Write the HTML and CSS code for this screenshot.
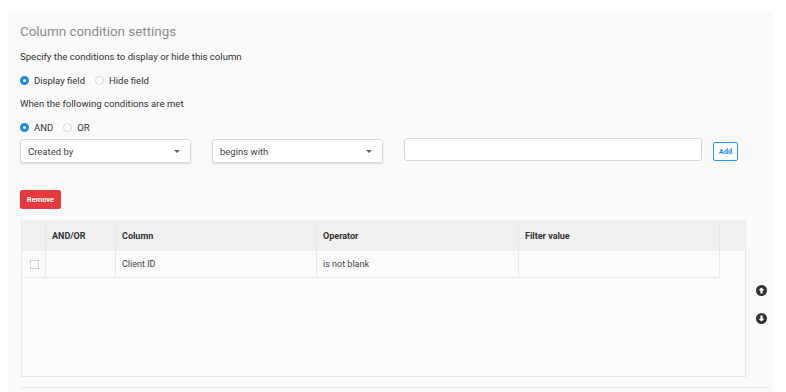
FILE: index.html
```html
<!DOCTYPE html>
<html lang="en">
<head>
    <meta charset="UTF-8">
    <title>Column condition settings</title>
    <link rel="stylesheet" href="styles.css">
</head>
<body>
    <div class="panel">
        <h2 class="title">Column condition settings</h2>
        <p class="line spec">Specify the conditions to display or hide this column</p>
        <div class="radios">
            <label class="radio"><span class="dot on"></span>Display field</label>
            <label class="radio"><span class="dot"></span>Hide field</label>
        </div>
        <p class="line when">When the following conditions are met</p>
        <div class="radios">
            <label class="radio"><span class="dot on"></span>AND</label>
            <label class="radio"><span class="dot"></span>OR</label>
        </div>

        <div class="controls">
            <div class="select">Created by<span class="caret"></span></div>
            <div class="select">begins with<span class="caret"></span></div>
            <div class="text-input"></div>
            <button class="btn-add">Add</button>
        </div>

        <button class="btn-remove">Remove</button>

        <div class="grid-wrap">
            <div class="grid">
                <div class="grid-head">
                    <div class="cell"></div>
                    <div class="cell">AND/OR</div>
                    <div class="cell">Column</div>
                    <div class="cell">Operator</div>
                    <div class="cell">Filter value</div>
                    <div class="cell"></div>
                </div>
                <div class="grid-row">
                    <div class="cell"><span class="check"></span></div>
                    <div class="cell"></div>
                    <div class="cell">Client ID</div>
                    <div class="cell">is not blank</div>
                    <div class="cell"></div>
                </div>
            </div>
            <div class="movers">
                <svg width="11" height="11" viewBox="0 0 12 12">
                    <circle cx="6" cy="6" r="6" fill="#333"/>
                    <path d="M6 2.6 L9.2 5.8 H7.2 V9.2 H4.8 V5.8 H2.8 Z" fill="#fff"/>
                </svg>
                <svg width="11" height="11" viewBox="0 0 12 12">
                    <circle cx="6" cy="6" r="6" fill="#333"/>
                    <path d="M6 9.4 L9.2 6.2 H7.2 V2.8 H4.8 V6.2 H2.8 Z" fill="#fff"/>
                </svg>
            </div>
        </div>

        <div class="separator"></div>
    </div>
</body>
</html>
```

FILE: styles.css
```css
body {
    margin: 0;
    padding: 13px 0 0 8px;
    background: #fff;
    font-family: Roboto, "Liberation Sans", sans-serif;
    color: #333;
}

.panel {
    width: 765px;
    height: 380px;
    background: #fafafa;
    padding: 9px 0 0 12px;
    box-sizing: border-box;
}

.title {
    margin: 0;
    height: 20px;
    line-height: 20px;
    font-size: 13.4px;
    font-weight: normal;
    color: #8c8c8c;
}

.line {
    margin: 0;
    height: 20px;
    line-height: 20px;
    font-size: 9.6px;
    color: #333;
}

.spec { margin-top: 5px; }
.when { margin-top: 4px; }

.radios {
    display: flex;
    align-items: center;
    height: 20px;
    margin-top: 3px;
    gap: 10px;
    font-size: 9.5px;
}

.radio {
    display: flex;
    align-items: center;
    gap: 5px;
}

.dot {
    width: 9px;
    height: 9px;
    border-radius: 50%;
    border: 1px solid #d6d6d6;
    background: #fff;
    box-sizing: border-box;
}

.dot.on {
    border: 3px solid #1e88e5;
    background: #fff;
}

.controls {
    display: flex;
    align-items: flex-start;
    margin-top: 1px;
    height: 25px;
}

.select {
    width: 171px;
    height: 24px;
    margin-top: 1px;
    margin-right: 21px;
    padding-left: 7px;
    box-sizing: border-box;
    display: flex;
    align-items: center;
    position: relative;
    background: #fff;
    border: 1px solid #dcdcdc;
    border-radius: 3px;
    box-shadow: 0 1px 2px rgba(0, 0, 0, 0.12);
    font-size: 9.5px;
    color: #444;
}

.caret {
    position: absolute;
    right: 10px;
    top: 10px;
    border-left: 3px solid transparent;
    border-right: 3px solid transparent;
    border-top: 3px solid #666;
}

.text-input {
    width: 298px;
    height: 23px;
    box-sizing: border-box;
    background: #fff;
    border: 1px solid #d8d8d8;
    border-radius: 3px;
    margin-right: 11px;
}

.btn-add {
    margin-top: 4px;
    width: 25px;
    height: 19px;
    padding: 0;
    background: #fff;
    border: 1px solid #2196f3;
    border-radius: 2px;
    color: #1e88e5;
    font-family: Roboto, "Liberation Sans", sans-serif;
    font-size: 7.5px;
    font-weight: bold;
}

.btn-remove {
    display: block;
    margin-top: 27px;
    width: 41px;
    height: 19px;
    padding: 0;
    background: #e53940;
    border: none;
    border-radius: 2px;
    color: #fff;
    font-family: Roboto, "Liberation Sans", sans-serif;
    font-size: 7.5px;
    font-weight: bold;
}

.grid-wrap {
    display: flex;
    margin-top: 11px;
}

.grid {
    width: 725px;
    height: 157px;
    margin-left: 1px;
    box-sizing: border-box;
    border: 1px solid #e6e6e6;
    border-top: none;
    background: #fbfbfb;
}

.grid-head {
    display: grid;
    grid-template-columns: 24px 70px 201px 202px 201px 26px;
    height: 31px;
    background: #f0f0f0;
    font-size: 9px;
    font-weight: bold;
}

.grid-row {
    display: grid;
    grid-template-columns: 24px 70px 201px 202px 201px;
    width: 698px;
    height: 26px;
    border-bottom: 1px solid #e8e8e8;
    font-size: 9px;
    color: #444;
}

.cell {
    display: flex;
    align-items: center;
    padding-left: 6px;
    border-right: 1px solid #e8e8e8;
}

.grid-head .cell:last-child { border-right: none; }

.check {
    width: 9px;
    height: 9px;
    margin-left: 2px;
    box-sizing: border-box;
    border: 1px solid #d0d0d0;
    background: #fff;
}

.movers {
    display: flex;
    flex-direction: column;
    gap: 17px;
    padding: 65px 0 0 10px;
}

.separator {
    margin-top: 10px;
    width: 750px;
    border-top: 1px solid #e8e8e8;
}
```
